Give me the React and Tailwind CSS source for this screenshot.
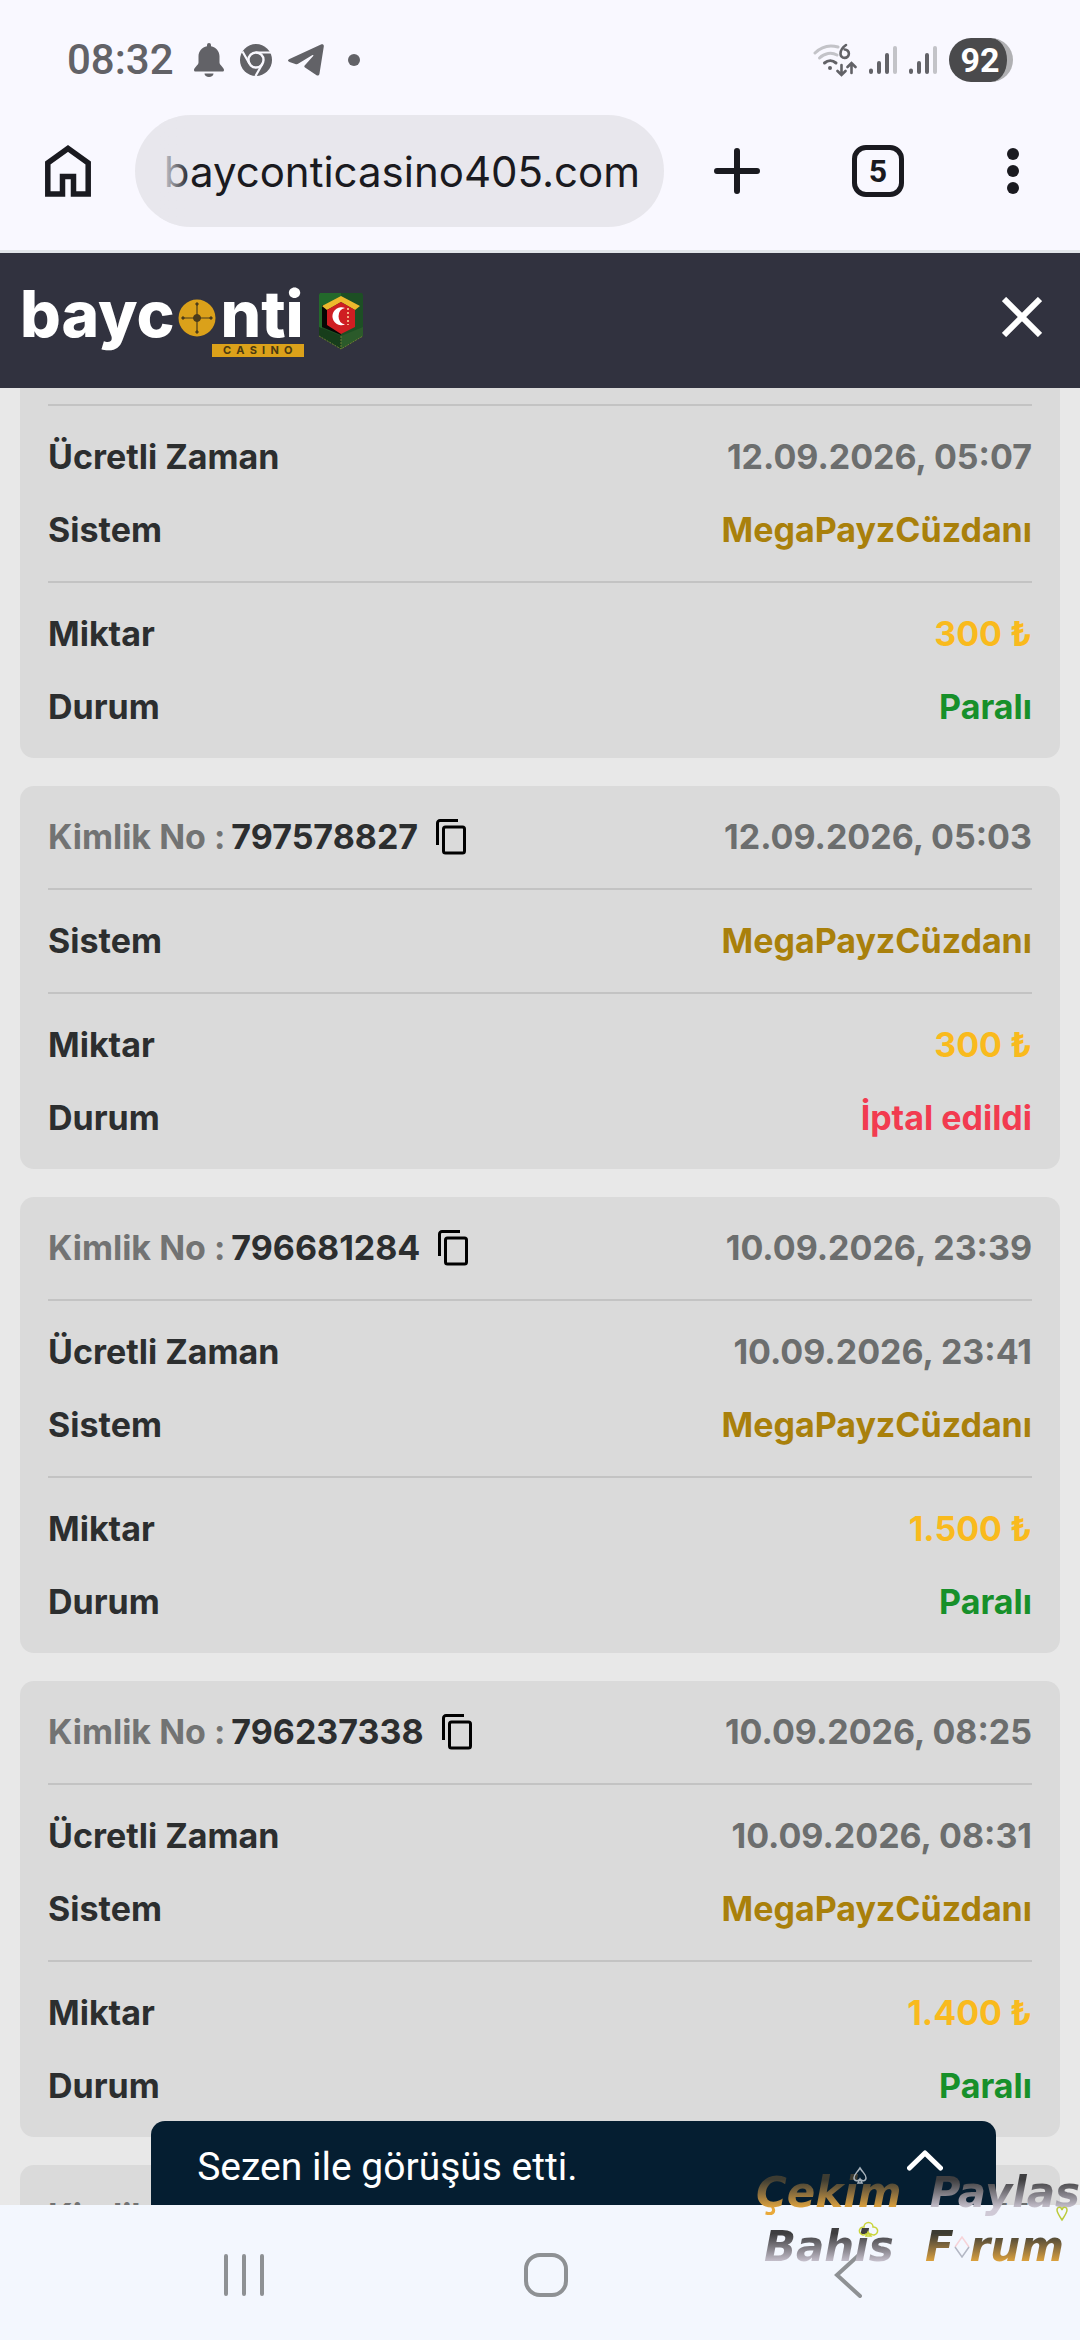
import React, { useState } from "react";

const transactions = [
    {
        id: null,
        paidAt: "12.09.2026, 05:07",
        system: "MegaPayzCüzdanı",
        amount: "300 ₺",
        status: "paid",
    },
    {
        id: "797578827",
        date: "12.09.2026, 05:03",
        system: "MegaPayzCüzdanı",
        amount: "300 ₺",
        status: "cancelled",
    },
    {
        id: "796681284",
        date: "10.09.2026, 23:39",
        paidAt: "10.09.2026, 23:41",
        system: "MegaPayzCüzdanı",
        amount: "1.500 ₺",
        status: "paid",
    },
    {
        id: "796237338",
        date: "10.09.2026, 08:25",
        paidAt: "10.09.2026, 08:31",
        system: "MegaPayzCüzdanı",
        amount: "1.400 ₺",
        status: "paid",
    },
    {
        id: "795904116",
        date: "09.09.2026, 21:14",
        system: "MegaPayzCüzdanı",
        amount: "500 ₺",
        status: "paid",
    },
];

const statuses = {
    paid: { label: "Paralı", color: "text-[#17902a]" },
    cancelled: { label: "İptal edildi", color: "text-[#f23b50]" },
};

const SignalBars = () => (
    <svg viewBox="0 0 28 30" className="w-7 h-[30px]" fill="none" strokeWidth="4" strokeLinecap="round">
        <path d="M2 25.5v1.5M10 18v9M18 10v17" stroke="#626267" />
        <path d="M26 3v24" stroke="#c3c3c8" />
    </svg>
);

const StatusBar = () => (
    <div className="flex items-center justify-between h-[115px] pt-1 px-[67px] text-[#626267]">
        <div className="flex items-center gap-4">
            <span className="mr-1 font-['Roboto',sans-serif] text-[42px] font-medium leading-none">08:32</span>
            <svg viewBox="0 0 30 34" className="w-[30px] h-[34px]" fill="currentColor">
                <path d="M15 0a2 2 0 0 1 2 2v1.200c5 1 8.500 5 8.500 10v6.300c0 2.500 4.500 5 4.500 7.500 0 1-.8 1.500-1.500 1.500h-27C.8 28.500 0 28 0 27c0-2.500 4.500-5 4.500-7.500v-6.300c0-5 3.500-9 8.500-10V2a2 2 0 0 1 2-2z" />
                <path d="M10.500 30.500h9c0 2-2 3.500-4.500 3.500s-4.500-1.500-4.500-3.500z" />
            </svg>
            <svg viewBox="0 0 32 32" className="w-8 h-8">
                <circle cx="16" cy="16" r="16" fill="#626267" />
                <circle cx="16" cy="16" r="7.500" fill="none" stroke="#f9f8ff" strokeWidth="2.400" />
                <path d="M16 8.500H31M9.500 19.800L2.500 7.500M22.500 19.800L15.500 32" stroke="#f9f8ff" strokeWidth="2.200" />
            </svg>
            <svg viewBox="0 0 36 32" className="w-9 h-8" fill="currentColor">
                <path d="M33.500.3C35 0 36 .8 35.800 2.400L31.500 29.500c-.3 2-1.700 2.600-3.300 1.500L17 23.500c-.9-.7-.9-1.400-.1-2.200l8.300-9.300c.8-.9-.1-1.500-1.100-.8L10.500 19.600c-1 .7-2 .7-3.200.4L1.500 18c-2-.7-2-2 0-3z" />
            </svg>
            <span className="ml-2 w-3 h-3 rounded-full bg-[#626267]" />
        </div>
        <div className="flex items-center gap-3">
            <svg viewBox="0 0 44 34" className="w-11 h-[34px]" fill="none" strokeLinecap="round" strokeWidth="3">
                <path d="M2 10C9 3 18 2 25 4" stroke="#c3c3c8" />
                <path d="M6.500 15c5-5 12-6 17.500-3" stroke="#c3c3c8" />
                <path d="M11.500 20c3.500-3 8-3 11.500 0" stroke="#626267" />
                <circle cx="17" cy="25" r="2" fill="#626267" />
                <path d="M28.500 22v9M24.500 28l4 4 4-4M38.500 30v-9M34.500 24l4-4 4 4" stroke="#626267" strokeWidth="2.600" />
                <path d="M33 2c-3 2-5.500 5-5.500 8.500a4.200 4.200 0 1 0 4.200-4" stroke="#626267" strokeWidth="2.600" />
            </svg>
            <SignalBars />
            <SignalBars />
            <span className="flex items-center justify-center w-16 h-11 overflow-hidden rounded-full border-r-[6px] border-[#b0b0b3] bg-[#4a4a4c] pl-1 font-['Roboto',sans-serif] text-[34px] font-bold leading-none text-white">
                92
            </span>
        </div>
    </div>
);

const BrowserBar = () => (
    <div className="flex items-center border-b-[3px] border-[#e1e5e9] pb-[23px] text-[#1a1a20]">
        <button type="button" aria-label="Ana sayfa" className="flex justify-center w-[135px]">
            <svg viewBox="0 0 46 52" className="w-[46px] h-[52px]" fill="none" stroke="currentColor" strokeWidth="5.500">
                <path d="M2.800 49V18L23 3.500 43.200 18v31H28.500V31.500h-11V49z" />
            </svg>
        </button>
        <div className="relative flex-1 min-w-0 h-28 overflow-hidden rounded-full bg-[#e8e7ed]">
            <input
                type="text"
                aria-label="Adres"
                defaultValue="bayconticasino405.com"
                className="w-full h-full px-6 bg-transparent font-['Inter',sans-serif] text-[42px] text-right outline-none"
            />
            <span className="absolute inset-y-0 left-6 w-8 bg-gradient-to-r from-[#e8e7ed] to-transparent" />
        </div>
        <button type="button" aria-label="Yeni sekme" className="flex justify-center w-[146px]">
            <svg viewBox="0 0 46 46" className="w-[46px] h-[46px]" fill="none" stroke="currentColor" strokeWidth="6" strokeLinecap="round">
                <path d="M23 3v40M3 23h40" />
            </svg>
        </button>
        <button type="button" aria-label="Sekmeler" className="flex justify-center w-[136px]">
            <span className="flex items-center justify-center w-[52px] h-[52px] rounded-[14px] border-[5px] border-[#1a1a20] font-['Roboto',sans-serif] text-[32px] font-bold leading-none">
                5
            </span>
        </button>
        <button type="button" aria-label="Menü" className="flex justify-center w-[134px]">
            <svg viewBox="0 0 12 46" className="w-3 h-[46px]" fill="currentColor">
                <circle cx="6" cy="6" r="6" />
                <circle cx="6" cy="23" r="6" />
                <circle cx="6" cy="40" r="6" />
            </svg>
        </button>
    </div>
);

const Logo = () => (
    <a href="#" className="flex flex-col items-end font-['Inter',sans-serif] text-white">
        <span className="flex items-center text-[64px] font-extrabold leading-[60px]">
            <span>bayc</span>
            <svg viewBox="0 0 38 38" className="mx-1 mt-2 w-[38px] h-[38px]">
                <circle cx="19" cy="19" r="18.500" fill="#dba11a" />
                <g stroke="#4a3c1c" fill="#4a3c1c">
                    <path d="M19 5v28M5 19h28" strokeWidth="1.200" />
                    <circle cx="19" cy="19" r="3.500" />
                    <circle cx="19" cy="5" r="1.200" />
                    <circle cx="19" cy="33" r="1.200" />
                    <circle cx="5" cy="19" r="1.200" />
                    <circle cx="33" cy="19" r="1.200" />
                </g>
            </svg>
            <span>nti</span>
        </span>
        <span className="flex items-center justify-center w-[92px] h-[13px] bg-[#dba11a] text-[11px] font-bold leading-none text-[#4a3a10] whitespace-pre">
            C  A  S  I  N  O
        </span>
    </a>
);

const Badge = () => (
    <svg viewBox="0 0 46 58" className="w-[46px] h-[58px]">
        <path d="M2 1h42l1 2v41L23 57 1 44V3z" fill="#1d4f24" />
        <path d="M2 1h21v5L4 15v25L1 44V3z" fill="#23692b" />
        <path d="M23 44l22-9v9L23 57z" fill="#2b5a2a" />
        <path d="M1 35l22 9v13L1 44z" fill="#173d1b" />
        <path d="M4 13l19 10v20L4 35z" fill="#080605" />
        <path d="M23 4l19 10-5 4-14-8-14 8-5-4z" fill="#eeb92d" />
        <path d="M23 10l14 8v17l-14 7-14-9V18z" fill="#cf1e22" />
        <path d="M27 16a9 9 0 1 0 0 16.500 8.500 8.500 0 0 1 0-16.500z" fill="#fff" />
        <path d="M30 16v17" stroke="#f3ae80" strokeWidth="2" strokeDasharray="2 2" />
        <path d="M1 44l22 13 22-13M23 44v13" stroke="#6f7a35" strokeWidth="1" fill="none" strokeDasharray="2 1" />
    </svg>
);

const CasinoHeader = () => (
    <header className="flex items-center justify-between h-[135px] pl-5 pr-[38px] bg-[#31323f]">
        <div className="flex items-center gap-[14px]">
            <Logo />
            <Badge />
        </div>
        <button type="button" aria-label="Kapat" className="pb-2">
            <svg viewBox="0 0 40 40" className="w-10 h-10" fill="none" stroke="#fff" strokeWidth="6">
                <path d="M2 2l36 36M38 2L2 38" />
            </svg>
        </button>
    </header>
);

const Row = ({ label, value, color }) => (
    <div className="flex items-center justify-between leading-[46px]">
        <dt>{label}</dt>
        <dd className={color}>{value}</dd>
    </div>
);

const TransactionCard = ({ item }) => {
    const status = statuses[item.status];

    return (
        <article
            className={`shrink-0 px-7 bg-[#dadada] text-[34px] font-bold text-[#2c2e2f] ${
                item.id ? "rounded-[14px]" : "rounded-b-[14px] pt-4"
            }`}
        >
            {item.id && (
                <div className="flex items-center justify-between py-7 leading-[46px]">
                    <div className="flex items-center">
                        <span className="text-[#727373]">Kimlik No :</span>
                        <span className="ml-[6px]">{item.id}</span>
                        <button
                            type="button"
                            aria-label="Kopyala"
                            className="ml-[18px]"
                            onClick={() => navigator.clipboard?.writeText(item.id)}
                        >
                            <svg viewBox="0 0 30 36" className="w-[30px] h-9" fill="none" stroke="#000" strokeWidth="3">
                                <path d="M1.500 26V4A2.500 2.500 0 0 1 4 1.500h18" />
                                <rect x="7.500" y="8" width="21" height="26" rx="2" />
                            </svg>
                        </button>
                    </div>
                    <span className="text-[#6c6e6e]">{item.date}</span>
                </div>
            )}
            <dl className="flex flex-col gap-[27px] py-7 border-t-2 border-[#c3c3c3]">
                {item.paidAt && <Row label="Ücretli Zaman" value={item.paidAt} color="text-[#6c6e6e]" />}
                <Row label="Sistem" value={item.system} color="text-[#a9800b]" />
            </dl>
            <dl className="flex flex-col gap-[27px] py-7 border-t-2 border-[#c3c3c3]">
                <Row label="Miktar" value={item.amount} color="text-[#f9ba1d]" />
                <Row label="Durum" value={status.label} color={status.color} />
            </dl>
        </article>
    );
};

const ChatWidget = () => {
    const [open, setOpen] = useState(false);

    return (
        <button
            type="button"
            aria-expanded={open}
            onClick={() => setOpen(!open)}
            className="absolute bottom-0 left-[14%] right-[84px] flex items-center justify-between h-[84px] pt-2 pl-[46px] pr-[53px] rounded-t-[14px] bg-[#051e31] font-['Roboto',sans-serif] text-[39px] text-white"
        >
            <span>Sezen ile görüşüs etti.</span>
            <svg viewBox="0 0 36 36" className="w-9 h-9" fill="none" stroke="#fff" strokeWidth="5" strokeLinecap="round" strokeLinejoin="round">
                <path d="M2.500 19L18 4l15.500 15" />
            </svg>
        </button>
    );
};

const NavBar = () => (
    <nav className="flex items-center h-[135px] pt-1 pl-[93px] pr-[81px] bg-[#f3f7fe] text-[#8e9194]">
        <button type="button" aria-label="Son uygulamalar" className="flex justify-center flex-1">
            <svg viewBox="0 0 40 44" className="w-10 h-11" fill="none" stroke="currentColor" strokeWidth="4" strokeLinecap="round">
                <path d="M2 3v38M20 3v38M38 3v38" />
            </svg>
        </button>
        <button type="button" aria-label="Ana ekran" className="flex justify-center flex-1">
            <span className="w-11 h-11 rounded-2xl border-4 border-[#8e9194]" />
        </button>
        <button type="button" aria-label="Geri" className="flex justify-center flex-1">
            <svg viewBox="0 0 28 46" className="w-7 h-[46px]" fill="none" stroke="currentColor" strokeWidth="4" strokeLinecap="round">
                <path d="M26 2L3 23l23 21" />
            </svg>
        </button>
    </nav>
);

const gold = "bg-gradient-to-b from-[#3d3c32] from-25% to-[#e9a93a] to-80% bg-clip-text text-transparent";
const silver = "bg-gradient-to-b from-[#3e3e40] from-25% to-[#cfc9d6] to-80% bg-clip-text text-transparent";

const Watermark = () => (
    <div className="absolute bottom-[66px] right-0 w-[324px] pointer-events-none font-['DejaVu_Sans',sans-serif] text-[42px] italic font-bold leading-[54px] whitespace-nowrap">
        <svg viewBox="0 0 324 130" className="absolute inset-x-0 bottom-0 w-full h-[130px]" fill="none" strokeWidth="1.500">
            <path d="M104 24c-3 5-6 6-6 10 0 3 4 4 6 1 2 3 6 2 6-1 0-4-3-5-6-10zM104 35l-2 4h4z" stroke="#a9b4bd" />
            <path d="M108 83a4 4 0 1 1 9 0 4 4 0 1 1-2 7h-5a4 4 0 1 1-2-7zM112 88l-2 4h5z" stroke="#c9d43a" />
            <path d="M306 76c-4-6-5-8-5-10 0-3 4-4 5 0 1-4 5-3 5 0 0 2-1 4-5 10z" stroke="#bccb3c" />
        </svg>
        <div className="flex justify-between">
            <span className={gold}>Çekim</span>
            <span className={silver}>Paylas</span>
        </div>
        <div className="flex justify-between pl-2 pr-4">
            <span className={silver}>Bahis</span>
            <span className="flex items-center">
                <span className={gold}>F</span>
                <svg viewBox="0 0 16 22" className="w-4 h-[22px]" fill="none" strokeWidth="1.500">
                    <path d="M1 11L8 1l7 10" stroke="#f6d3d8" />
                    <path d="M1 11l7 10 7-10" stroke="#b3b7c4" />
                </svg>
                <span className={gold}>rum</span>
            </span>
        </div>
    </div>
);

export default function App() {
    return (
        <div className="relative flex flex-col h-screen overflow-hidden bg-[#f9f8ff]">
            <StatusBar />
            <BrowserBar />
            <CasinoHeader />
            <div className="relative flex-1 min-h-0">
                <main className="flex flex-col gap-7 h-full px-5 overflow-hidden bg-[#e8e8e8] font-['Inter',sans-serif]">
                    {transactions.map((item, i) => (
                        <TransactionCard key={item.id || i} item={item} />
                    ))}
                </main>
                <ChatWidget />
            </div>
            <NavBar />
            <Watermark />
        </div>
    );
}
